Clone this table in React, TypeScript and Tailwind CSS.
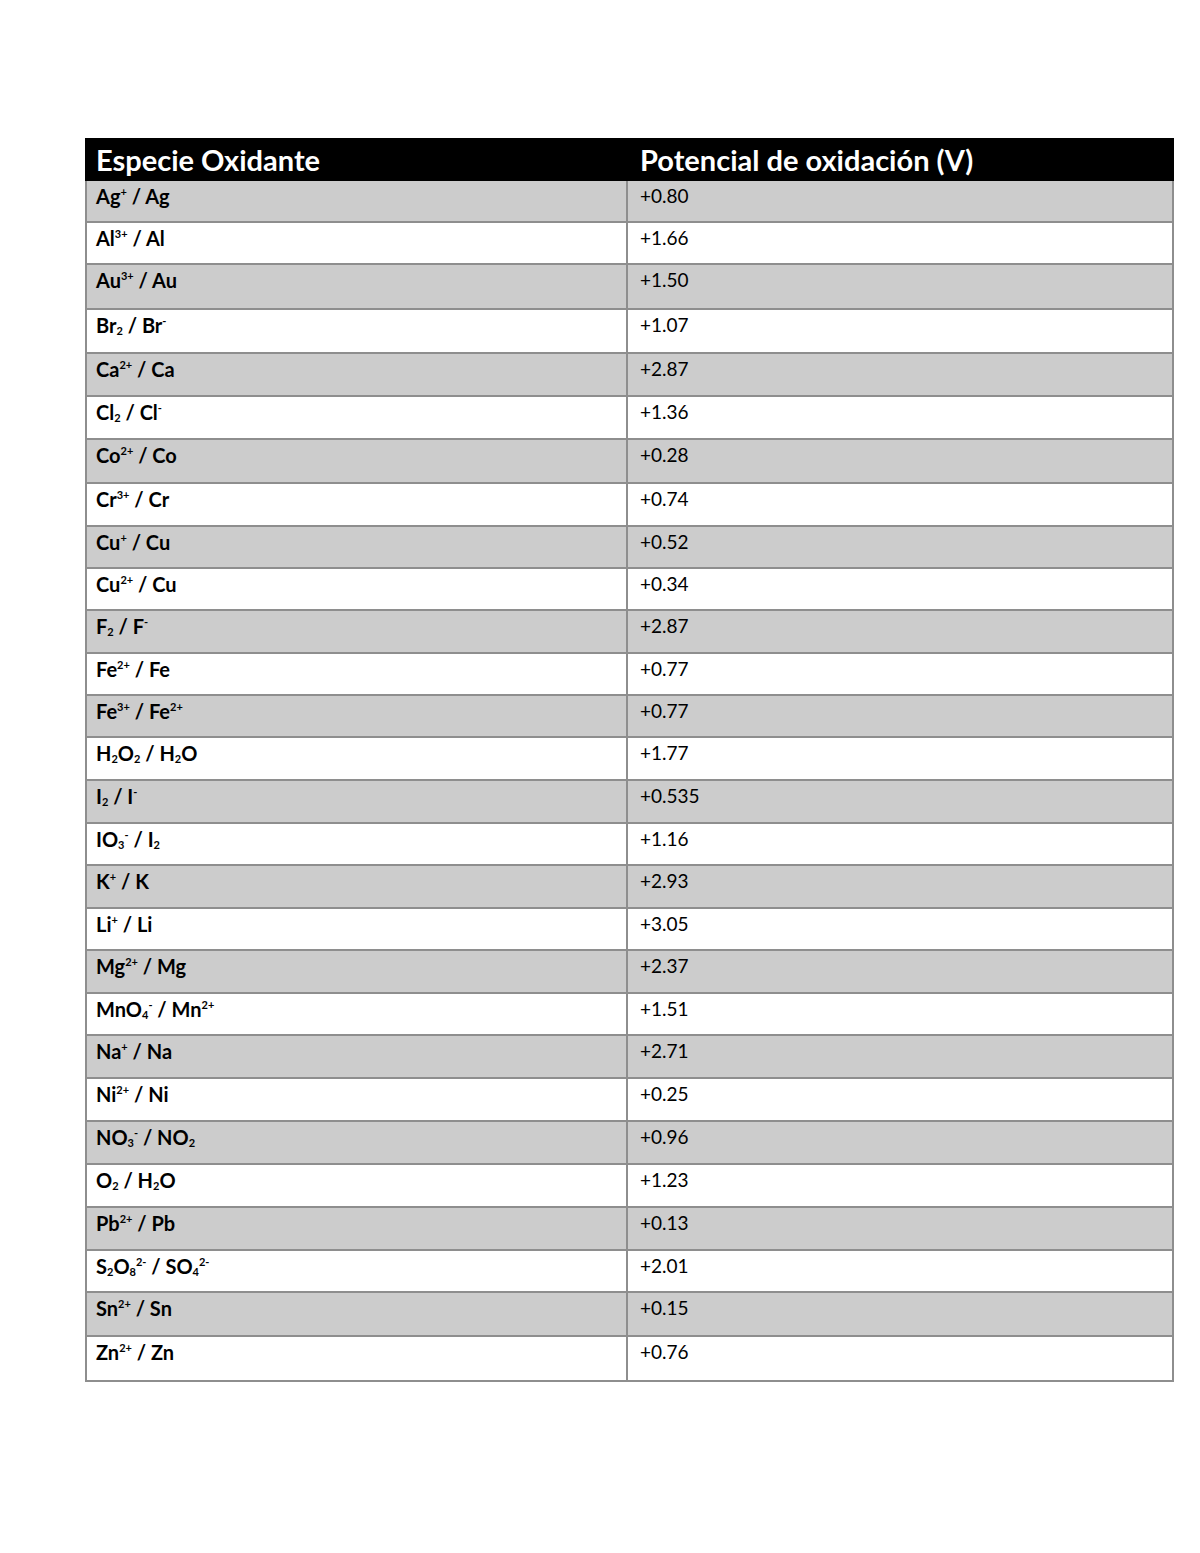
import React from 'react'

const rows: { sp: string; v: string; h: string }[] = [
  { sp: 'Ag^+ / Ag', v: '+0.80', h: 'h-[42px]' },
  { sp: 'Al^{3+} / Al', v: '+1.66', h: 'h-[42px]' },
  { sp: 'Au^{3+} / Au', v: '+1.50', h: 'h-[45px]' },
  { sp: 'Br_2 / Br^-', v: '+1.07', h: 'h-[44px]' },
  { sp: 'Ca^{2+} / Ca', v: '+2.87', h: 'h-[43px]' },
  { sp: 'Cl_2 / Cl^-', v: '+1.36', h: 'h-[43px]' },
  { sp: 'Co^{2+} / Co', v: '+0.28', h: 'h-[44px]' },
  { sp: 'Cr^{3+} / Cr', v: '+0.74', h: 'h-[43px]' },
  { sp: 'Cu^+ / Cu', v: '+0.52', h: 'h-[42px]' },
  { sp: 'Cu^{2+} / Cu', v: '+0.34', h: 'h-[42px]' },
  { sp: 'F_2 / F^-', v: '+2.87', h: 'h-[43px]' },
  { sp: 'Fe^{2+} / Fe', v: '+0.77', h: 'h-[42px]' },
  { sp: 'Fe^{3+} / Fe^{2+}', v: '+0.77', h: 'h-[42px]' },
  { sp: 'H_2O_2 / H_2O', v: '+1.77', h: 'h-[43px]' },
  { sp: 'I_2 / I^-', v: '+0.535', h: 'h-[43px]' },
  { sp: 'IO_3^- / I_2', v: '+1.16', h: 'h-[42px]' },
  { sp: 'K^+ / K', v: '+2.93', h: 'h-[43px]' },
  { sp: 'Li^+ / Li', v: '+3.05', h: 'h-[42px]' },
  { sp: 'Mg^{2+} / Mg', v: '+2.37', h: 'h-[43px]' },
  { sp: 'MnO_4^- / Mn^{2+}', v: '+1.51', h: 'h-[42px]' },
  { sp: 'Na^+ / Na', v: '+2.71', h: 'h-[43px]' },
  { sp: 'Ni^{2+} / Ni', v: '+0.25', h: 'h-[43px]' },
  { sp: 'NO_3^- / NO_2', v: '+0.96', h: 'h-[43px]' },
  { sp: 'O_2 / H_2O', v: '+1.23', h: 'h-[43px]' },
  { sp: 'Pb^{2+} / Pb', v: '+0.13', h: 'h-[43px]' },
  { sp: 'S_2O_8^{2-} / SO_4^{2-}', v: '+2.01', h: 'h-[42px]' },
  { sp: 'Sn^{2+} / Sn', v: '+0.15', h: 'h-[44px]' },
  { sp: 'Zn^{2+} / Zn', v: '+0.76', h: 'h-[45px]' },
]

// tiny parser for ^x, ^{..}, _x, _{..}
function Formula({ src }: { src: string }) {
  const parts: React.ReactNode[] = []
  let buf = ''
  let i = 0
  let k = 0
  while (i < src.length) {
    const c = src[i]
    if (c === '^' || c === '_') {
      if (buf) parts.push(<span key={k++}>{buf}</span>)
      buf = ''
      let txt = ''
      if (src[i + 1] === '{') {
        const end = src.indexOf('}', i)
        txt = src.slice(i + 2, end)
        i = end + 1
      } else {
        txt = src[i + 1]
        i += 2
      }
      parts.push(
        c === '^'
          ? <span key={k++} className="text-[11px] relative -top-[8px] leading-none">{txt}</span>
          : <span key={k++} className="text-[11px] relative top-[2px] leading-none">{txt}</span>
      )
    } else {
      buf += c
      i++
    }
  }
  if (buf) parts.push(<span key={k++}>{buf}</span>)
  return <>{parts}</>
}

export default function App() {
  return (
    <div className="w-[1200px] min-h-[1553px] bg-white pt-[138px] pl-[85px]" style={{ fontFamily: 'Lato, "Noto Sans", sans-serif' }}>
      <div className="w-[1089px]">
        <div className="flex h-[43px] bg-black text-white font-bold text-[29px] leading-none">
          <div className="w-[543px] pl-[11px] pt-[7px]">Especie Oxidante</div>
          <div className="flex-1 pl-[12px] pt-[7px]">Potencial de oxidación (V)</div>
        </div>
        {rows.map((r, idx) => (
          <div
            key={r.sp}
            className={`flex border-x-2 border-b-2 border-[#8e8e8e] ${r.h} ${idx % 2 === 0 ? 'bg-[#cccccc]' : 'bg-white'}`}
          >
            <div className="w-[541px] border-r-2 border-[#8e8e8e] pl-[9px] pt-[3px] text-[20px] font-bold text-black leading-[24px]">
              <Formula src={r.sp} />
            </div>
            <div className="flex-1 pl-[12px] pt-[4px] text-[19px] text-black leading-[22px]">{r.v}</div>
          </div>
        ))}
      </div>
    </div>
  )
}
